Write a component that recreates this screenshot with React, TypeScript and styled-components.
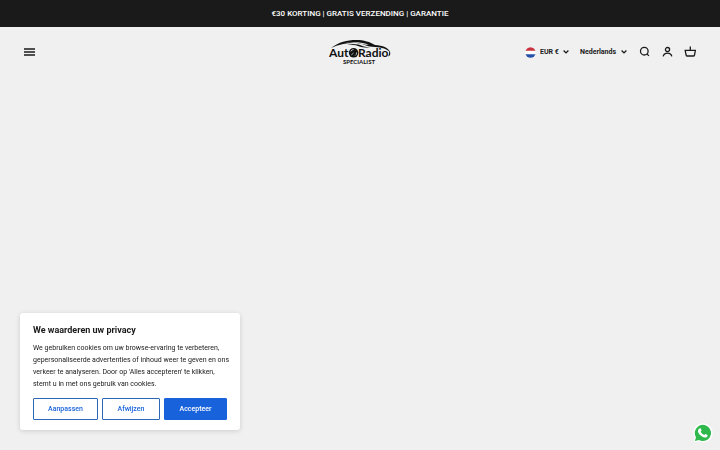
import React from "react";
import styled, { createGlobalStyle } from "styled-components";

const GlobalStyle = createGlobalStyle`
  *, *::before, *::after { box-sizing: border-box; }
  body {
    margin: 0;
    background: #f0f0f0;
    color: #1a1a1a;
    font-family: Roboto, "Liberation Sans", sans-serif;
  }
  button, select { font: inherit; color: inherit; }
`;

const Announcement = styled.div`
  padding: 7px 24px 6px;
  background: #1a1a1a;
  color: #fff;
  font-size: 8px;
  font-weight: 500;
  line-height: 14px;
  text-align: center;
`;

const Header = styled.header`
  display: grid;
  grid-template-columns: 1fr auto 1fr;
  align-items: center;
  height: 50px;
  padding: 0 24px;
`;

const IconButton = styled.button`
  display: flex;
  padding: 0;
  border: 0;
  background: none;
  cursor: pointer;
`;

const LogoLink = styled.a`
  display: flex;
  color: #111;
`;

const Tools = styled.div`
  display: flex;
  align-items: center;
  justify-content: flex-end;
  gap: 11px;
`;

const Icons = styled.div`
  display: flex;
  gap: 11px;
`;

const Picker = styled.label`
  display: flex;
  align-items: center;
  gap: 4px;
`;

const PickerSelect = styled.select`
  appearance: none;
  padding: 0;
  border: 0;
  background: none;
  font-size: 7px;
  font-weight: 700;
  line-height: 12px;
  cursor: pointer;
`;

const Consent = styled.section`
  position: fixed;
  left: 20px;
  bottom: 20px;
  width: 220px;
  padding: 11px 13px 10px;
  border-radius: 3px;
  background: #fff;
  box-shadow: 0 1px 5px rgba(0, 0, 0, 0.15);
`;

const ConsentTitle = styled.h2`
  margin: 0 0 6px;
  font-size: 9px;
  font-weight: 700;
  line-height: 12px;
`;

const ConsentText = styled.p`
  margin: 0 0 8px;
  font-size: 7px;
  line-height: 12px;
  white-space: nowrap;
`;

const Actions = styled.div`
  display: grid;
  grid-template-columns: 65px 1fr 63px;
  gap: 4px;
`;

const ActionButton = styled.button<{ $primary?: boolean }>`
  height: 22px;
  padding: 0;
  border: 1px solid ${(p) => (p.$primary ? "#1863dc" : "#2c68b8")};
  border-radius: 1px;
  background: ${(p) => (p.$primary ? "#1863dc" : "#fff")};
  color: ${(p) => (p.$primary ? "#fff" : "#1863dc")};
  font-size: 7px;
  font-weight: 500;
  cursor: pointer;
`;

const ChatLink = styled.a`
  position: fixed;
  right: 7px;
  bottom: 7px;
  display: flex;
`;

const MenuIcon = () => (
  <svg width="11" height="8" viewBox="0 0 11 8" fill="none" stroke="#1a1a1a" strokeWidth="1.4">
    <path d="M0 1h11M0 4h11M0 7h11" />
  </svg>
);

const Chevron = () => (
  <svg width="6" height="4" viewBox="0 0 6 4" fill="none" stroke="#1a1a1a" strokeWidth="1.3">
    <path d="M.6.5 3 2.9 5.4.5" />
  </svg>
);

const Flag = () => (
  <svg width="11" height="11" viewBox="0 0 11 11">
    <clipPath id="flag-circle">
      <circle cx="5.5" cy="5.5" r="5.2" />
    </clipPath>
    <g clipPath="url(#flag-circle)">
      <path fill="#fff" d="M0 0h11v11H0z" />
      <path fill="#c8323c" d="M0 0h11v3.7H0z" />
      <path fill="#2450a8" d="M0 7.3h11V11H0z" />
    </g>
  </svg>
);

const SearchIcon = () => (
  <svg width="12" height="12" viewBox="0 0 12 12" fill="none" stroke="#1a1a1a" strokeWidth="1.3">
    <circle cx="6.3" cy="5.2" r="3.8" />
    <path d="m8.9 7.9 2 2" />
  </svg>
);

const AccountIcon = () => (
  <svg width="12" height="12" viewBox="0 0 12 12" fill="none" stroke="#1a1a1a" strokeWidth="1.3">
    <circle cx="6.5" cy="3.6" r="2.1" />
    <path d="M2.2 10.3c.5-2 2-3.2 4.3-3.2s3.8 1.2 4.3 3.2" />
  </svg>
);

const BasketIcon = () => (
  <svg width="12" height="12" viewBox="0 0 12 12" fill="none" stroke="#1a1a1a" strokeWidth="1.3">
    <path d="M1.2 4.3h10.2l-.9 4.7a1.3 1.3 0 0 1-1.3 1H3.4a1.3 1.3 0 0 1-1.3-1zM6.3 4.3V.4" />
  </svg>
);

const Logo = () => (
  <svg
    width="62"
    height="26"
    viewBox="0 0 62 26"
    fill="#111"
    fontFamily='Lato, "Liberation Sans", sans-serif'
    role="img"
    aria-label="AutoRadio Specialist"
  >
    <path d="M2 9C10 3 18 1 27 1c8 0 14 2 19 5 8 .5 13 2.500 15.500 7.500C58 10 53 8.300 46 8c-4 0-7-.6-11-2.200C27 2.500 13 4 2 9z" />
    <path fill="#f0f0f0" d="M12 5c8-2.800 18-3 28 .8-3 .2-5-.2-8-1-7-1.800-13-1.600-20 .2z" />
    <path d="M18 5.600c7-1.200 12 0 16 1.600l7 1.600c-5 .3-9-.6-12-1.700-3-1-6-1.500-11-1.500z" />
    <path d="M60 12c1.500 1 1.700 3 .5 4.800l-1.500.7c1.200-1.700 1.400-3.500 1-5.500z" />
    <text x="0" y="18" fontSize="12" fontWeight="700">Aut</text>
    <circle cx="24.600" cy="13.800" r="4.800" />
    <path d="M21.800 12.500a3 3 0 0 1 2.800-2M27.600 13.400a3 3 0 0 1-1.500 3.200M22.300 16l2.300-2" fill="none" stroke="#f0f0f0" strokeWidth=".7" />
    <text x="29" y="18" fontSize="12" fontWeight="700">Radio</text>
    <text x="30" y="25" fontSize="6" fontWeight="700" textAnchor="middle">SPECIALIST</text>
  </svg>
);

const WhatsAppIcon = () => (
  <svg width="20" height="20" viewBox="0 0 20 20">
    <path fill="#fff" d="M.5 19.500 1.800 14.600A9.500 9.500 0 1 1 5.500 18.200z" />
    <path fill="#2fb84b" d="m1.900 18.100 1.100-3.900A8.100 8.100 0 1 1 5.900 17z" />
    <path fill="#fff" d="M7 5.300c.4-.1.700 0 .9.500l.6 1.500c.1.300 0 .6-.8 1.500.8 1.500 1.900 2.500 3.500 3.200.8-.9 1-1.200 1.400-1l1.800.9c.3.200.3.500.1 1.100-.4 1.200-1.600 1.700-2.600 1.600-3.400-.5-6.300-3.400-6.900-6-.2-1.300.8-2.900 2-3.300z" />
  </svg>
);

export default function App() {
  return (
    <>
      <GlobalStyle />
      <Announcement>€30 KORTING | GRATIS VERZENDING | GARANTIE</Announcement>
      <Header>
        <IconButton aria-label="Menu">
          <MenuIcon />
        </IconButton>
        <LogoLink href="#">
          <Logo />
        </LogoLink>
        <Tools>
          <Picker>
            <Flag />
            <PickerSelect aria-label="Valuta">
              <option>EUR €</option>
            </PickerSelect>
            <Chevron />
          </Picker>
          <Picker>
            <PickerSelect aria-label="Taal">
              <option>Nederlands</option>
            </PickerSelect>
            <Chevron />
          </Picker>
          <Icons>
            <IconButton aria-label="Zoeken">
              <SearchIcon />
            </IconButton>
            <IconButton aria-label="Account">
              <AccountIcon />
            </IconButton>
            <IconButton aria-label="Winkelwagen">
              <BasketIcon />
            </IconButton>
          </Icons>
        </Tools>
      </Header>
      <Consent aria-labelledby="consent-title">
        <ConsentTitle id="consent-title">We waarderen uw privacy</ConsentTitle>
        <ConsentText>
          We gebruiken cookies om uw browse-ervaring te verbeteren,
          <br />
          gepersonaliseerde advertenties of inhoud weer te geven en ons
          <br />
          verkeer te analyseren. Door op 'Alles accepteren' te klikken,
          <br />
          stemt u in met ons gebruik van cookies.
        </ConsentText>
        <Actions>
          <ActionButton>Aanpassen</ActionButton>
          <ActionButton>Afwijzen</ActionButton>
          <ActionButton $primary>Accepteer</ActionButton>
        </Actions>
      </Consent>
      <ChatLink href="#" aria-label="WhatsApp">
        <WhatsAppIcon />
      </ChatLink>
    </>
  );
}
